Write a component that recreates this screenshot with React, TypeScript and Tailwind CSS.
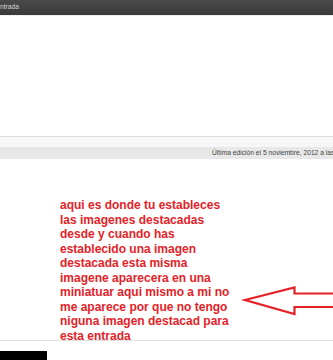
const lines = [
  'aqui es donde tu estableces',
  'las imagenes destacadas',
  'desde y cuando has',
  'establecido una imagen',
  'destacada esta misma',
  'imagene aparecera en una',
  'miniatuar aqui mismo a mi no',
  'me aparece por que no tengo',
  'niguna imagen destacad para',
  'esta entrada',
];

const App = () => {
  return (
    <div className="relative h-[360px] w-[333px] overflow-hidden bg-white font-['Liberation_Sans',Arial,sans-serif]">
      <div className="h-[15px] overflow-hidden whitespace-nowrap bg-gradient-to-b from-[#4a4a4a] to-[#3a3a3a] text-[6.7px] leading-[14px] text-[#d4d4d4]">
        ntrada
      </div>
      <div className="h-[121px] border-t border-[#f0f0f0]" />
      <div className="h-[11px] border-t border-[#dcdcdc] bg-[#f7f7f7]" />
      <div className="h-[12px] overflow-hidden whitespace-nowrap bg-[#e8e8e8] pl-[212px] text-[6.7px] leading-[12px] text-[#444]">
        Última edición el 5 noviembre, 2012 a las
      </div>

      <div className="h-[181px] pl-[60px] pt-[39px]">
        <p className="text-[12px] font-bold leading-[14.5px] whitespace-nowrap text-[#e52228]">
          {lines.map((l, i) => (
            <span key={i} className="block">
              {l}
            </span>
          ))}
        </p>
      </div>

      <div className="h-[11px] border-t border-[#e2e2e2]" />
      <div className="h-[10px] w-[47px] bg-black" />

      {/* red annotation arrow */}
      <svg
        className="absolute left-[240px] top-[280px]"
        width="93"
        height="40"
        viewBox="0 0 93 40"
        fill="none"
      >
        <path
          d="M100 13.5 L54.5 13.5 L54.5 7.5 L5 20 L54.5 34 L54.5 27 L100 27"
          stroke="#e52228"
          strokeWidth="2.2"
          strokeLinejoin="miter"
        />
      </svg>
    </div>
  );
};

export default App;
